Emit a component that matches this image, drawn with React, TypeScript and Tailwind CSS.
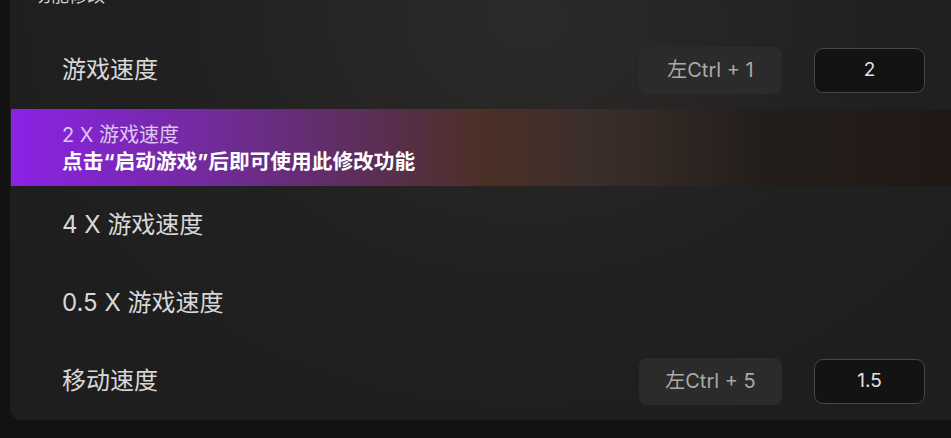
import React from 'react';

const cjk = { fontFamily: 'Inter, "Noto Sans CJK SC", sans-serif' };

type Row = { label: string; hotkey?: string; value?: string };

const rows: Row[] = [
  { label: '游戏速度', hotkey: '左Ctrl + 1', value: '2' },
  { label: '2 X 游戏速度' },
  { label: '4 X 游戏速度' },
  { label: '0.5 X 游戏速度' },
  { label: '移动速度', hotkey: '左Ctrl + 5', value: '1.5' },
];

const SettingRow = ({ row, active }: { row: Row; active?: boolean }) => {
  if (active) {
    return (
      <div className="ml-px h-[77px] flex flex-col justify-center pt-[3px] pl-[51px] bg-[linear-gradient(to_right,#8b22e6_0%,#712b98_22%,#4c3026_50%,#3b2e2a_62%,#231e1b_80%,#211816_100%)]">
        <div className="text-[20px] leading-[25px] text-[#dcc6f2]">{row.label}</div>
        <div className="text-[20.7px] leading-[27px] font-bold text-white">点击“启动游戏”后即可使用此修改功能</div>
      </div>
    );
  }
  return (
    <div className="h-[78px] flex items-center pl-[52px] pr-[26px]">
      <div className="flex-1 text-[24px] text-[#d8d8d8]">{row.label}</div>
      {row.hotkey && (
        <div className="flex items-center gap-8">
          <div className="w-[143px] h-[47px] rounded-lg bg-[#2b2b2b] flex items-center justify-center text-[20px] text-[#a9a9a9]">
            {row.hotkey}
          </div>
          <div className="w-[111px] h-[45px] rounded-[9px] border border-[#474747] bg-[#131313] flex items-center justify-center text-[19px] text-[#e2e2e2]">
            {row.value}
          </div>
        </div>
      )}
    </div>
  );
};

export default function App() {
  return (
    <div className="w-full h-[438px] bg-[#121212] overflow-hidden" style={cjk}>
      <div className="ml-[10px] -mt-[17px] rounded-bl-xl bg-[radial-gradient(ellipse_at_55%_8%,#2c2a29_0%,#222121_45%,#1e1e1e_80%)]">
        <div className="h-[48px] pt-[4px] pl-[23px] text-[18px] leading-[18px] text-[#cfcfcf]">功能修改</div>
        {rows.map((r, i) => (
          <SettingRow key={r.label} row={r} active={i === 1} />
        ))}
      </div>
    </div>
  );
}
